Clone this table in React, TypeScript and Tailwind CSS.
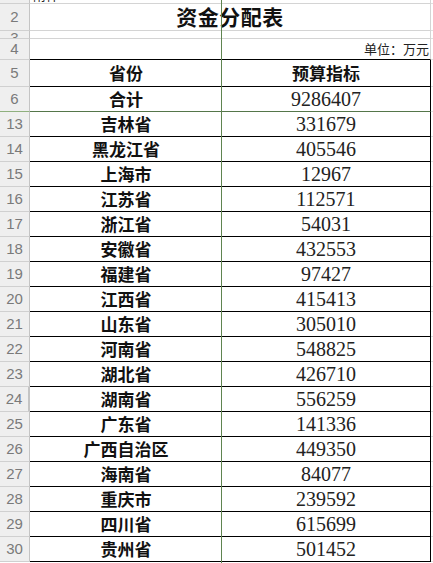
import React from 'react';

interface Row {
  no: number;
  name: string;
  value: string;
}

const rows: Row[] = [
  { no: 6, name: '合计', value: '9286407' },
  { no: 13, name: '吉林省', value: '331679' },
  { no: 14, name: '黑龙江省', value: '405546' },
  { no: 15, name: '上海市', value: '12967' },
  { no: 16, name: '江苏省', value: '112571' },
  { no: 17, name: '浙江省', value: '54031' },
  { no: 18, name: '安徽省', value: '432553' },
  { no: 19, name: '福建省', value: '97427' },
  { no: 20, name: '江西省', value: '415413' },
  { no: 21, name: '山东省', value: '305010' },
  { no: 22, name: '河南省', value: '548825' },
  { no: 23, name: '湖北省', value: '426710' },
  { no: 24, name: '湖南省', value: '556259' },
  { no: 25, name: '广东省', value: '141336' },
  { no: 26, name: '广西自治区', value: '449350' },
  { no: 27, name: '海南省', value: '84077' },
  { no: 28, name: '重庆市', value: '239592' },
  { no: 29, name: '四川省', value: '615699' },
  { no: 30, name: '贵州省', value: '501452' },
];

const cjk = "font-['Noto_Sans_CJK_SC',sans-serif]";
const hdr =
  "w-[30px] shrink-0 flex items-center justify-center bg-[#efefef] border-r border-r-[#c4c4c4] text-[15px] text-[#7a7a7a] font-['Liberation_Sans',sans-serif]";

const RowHeader: React.FC<{ no: number }> = ({ no }) => {
  const selected = no === 24;
  const hidden = no === 6;
  return (
    <div
      className={`${hdr} border-b ${
        selected
          ? 'bg-[#dcebd4] text-[#3c8a2c] border-r-2 border-r-[#4a9a38]'
          : ''
      } ${hidden ? 'border-b-[#8fb07e]' : 'border-b-[#d0d0d0]'}`}
    >
      {no}
    </div>
  );
};

export default function App() {
  return (
    <div className="relative w-[433px] h-[563px] bg-white overflow-hidden">
      {/* row 1 (mostly scrolled away) */}
      <div className="flex h-[4px]">
        <div className={`${hdr} border-b border-b-[#d0d0d0]`} />
        <div className="w-[401px] border-b border-b-[#d4d4d4] border-r border-r-[#d4d4d4] overflow-hidden">
          <div className={`${cjk} text-[13px] leading-[16px] -mt-[13px] pl-[3px] text-[#222]`}>附件</div>
        </div>
        <div className="flex-1 border-b border-b-[#e0e0e0]" />
      </div>

      {/* row 2: title */}
      <div className="flex h-[27px]">
        <div className={`${hdr} border-b border-b-[#d0d0d0]`}>2</div>
        <div
          className={`w-[401px] flex items-center justify-center border-b border-b-[#d4d4d4] border-r border-r-[#d4d4d4] ${cjk} text-[21px] font-bold text-[#111] tracking-[0.5px]`}
        >
          资金分配表
        </div>
        <div className="flex-1 border-b border-b-[#e0e0e0]" />
      </div>

      {/* row 3 */}
      <div className="flex h-[8px]">
        <div className={`${hdr} border-b border-b-[#d0d0d0] overflow-hidden !items-start`}>
          <span className="leading-[15px] -mt-[1px]">3</span>
        </div>
        <div className="w-[192px] border-b border-b-[#d4d4d4]" />
        <div className="w-[209px] border-b border-b-[#d4d4d4] border-r border-r-[#d4d4d4]" />
        <div className="flex-1 border-b border-b-[#e0e0e0]" />
      </div>

      {/* row 4 */}
      <div className="flex h-[21px]">
        <div className={`${hdr} border-b border-b-[#d0d0d0]`}>4</div>
        <div className="w-[192px] border-b border-b-black" />
        <div
          className={`w-[209px] flex items-center justify-end pr-[1px] border-b border-b-black border-r border-r-[#d4d4d4] ${cjk} text-[13px] text-[#222]`}
        >
          单位：万元
        </div>
        <div className="flex-1 border-b border-b-[#e0e0e0]" />
      </div>

      {/* row 5: column heads */}
      <div className="flex h-[27px]">
        <div className={`${hdr} border-b border-b-[#d0d0d0]`}>5</div>
        <div className={`w-[192px] flex items-center justify-center border-b border-b-black ${cjk} text-[17px] font-bold text-[#111]`}>
          省份
        </div>
        <div
          className={`w-[209px] flex items-center justify-center border-b border-b-black border-r border-r-black ${cjk} text-[17px] font-bold text-[#111]`}
        >
          预算指标
        </div>
        <div className="flex-1 border-b border-b-[#e0e0e0]" />
      </div>

      {rows.map((r) => (
        <div key={r.no} className="flex h-[25px]">
          <RowHeader no={r.no} />
          <div
            className={`w-[192px] flex items-center justify-center border-b ${
              r.no === 6 ? 'border-b-[#55764a]' : 'border-b-black'
            } ${cjk} text-[17px] font-bold text-[#111]`}
          >
            {r.name}
          </div>
          <div
            className={`w-[209px] flex items-center justify-center border-b border-r border-r-black ${
              r.no === 6 ? 'border-b-[#55764a]' : 'border-b-black'
            } font-['Liberation_Serif',serif] text-[20px] text-[#222]`}
          >
            {r.value}
          </div>
          <div className="flex-1 border-b border-b-[#e0e0e0]" />
        </div>
      ))}

      {/* column boundary line drawn over the sheet */}
      <div className="absolute top-0 bottom-0 left-[221px] w-px bg-[#5f8450]" />
    </div>
  );
}
